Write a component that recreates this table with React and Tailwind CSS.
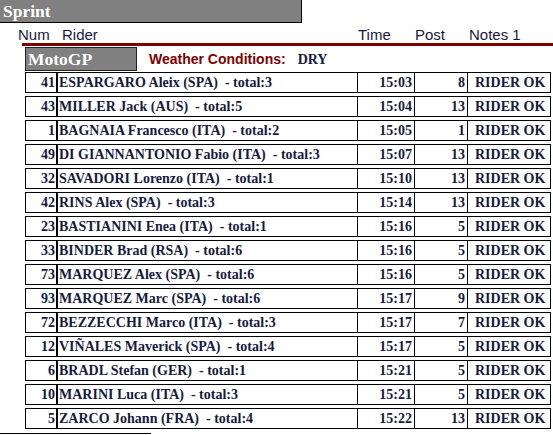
import React from "react";

const rows = [
  ["41", "ESPARGARO Aleix (SPA)  - total:3", "15:03", "8"],
  ["43", "MILLER Jack (AUS)  - total:5", "15:04", "13"],
  ["1", "BAGNAIA Francesco (ITA)  - total:2", "15:05", "1"],
  ["49", "DI GIANNANTONIO Fabio (ITA)  - total:3", "15:07", "13"],
  ["32", "SAVADORI Lorenzo (ITA)  - total:1", "15:10", "13"],
  ["42", "RINS Alex (SPA)  - total:3", "15:14", "13"],
  ["23", "BASTIANINI Enea (ITA)  - total:1", "15:16", "5"],
  ["33", "BINDER Brad (RSA)  - total:6", "15:16", "5"],
  ["73", "MARQUEZ Alex (SPA)  - total:6", "15:16", "5"],
  ["93", "MARQUEZ Marc (SPA)  - total:6", "15:17", "9"],
  ["72", "BEZZECCHI Marco (ITA)  - total:3", "15:17", "7"],
  ["12", "VIÑALES Maverick (SPA)  - total:4", "15:17", "5"],
  ["6", "BRADL Stefan (GER)  - total:1", "15:21", "5"],
  ["10", "MARINI Luca (ITA)  - total:3", "15:21", "5"],
  ["5", "ZARCO Johann (FRA)  - total:4", "15:22", "13"],
];

const serif = "font-['Liberation_Serif',serif]";
const sans = "font-['Liberation_Sans',Arial,sans-serif]";

export default function App() {
  return (
    <div className="w-[553px] h-[435px] bg-white overflow-hidden text-[#161a3e]">
      <div className={`w-[302px] h-[23px] bg-[#808080] border-r border-b border-black text-white font-bold text-[17.5px] leading-[22px] pl-[3px] ${serif}`}>
        Sprint
      </div>
      <div className={`flex h-[20px] items-end text-[15px] leading-[17px] ${sans}`}>
        <span className="ml-[18px] w-[44px]">Num</span>
        <span className="w-[296px]">Rider</span>
        <span className="w-[57px]">Time</span>
        <span className="w-[54px]">Post</span>
        <span>Notes 1</span>
      </div>
      <div className="ml-[22px] h-[3px] bg-[#800000]" />
      <div className="flex items-center h-[24px] mt-[1px] ml-[25px]">
        <div className={`w-[112px] h-[24px] bg-[#808080] border border-[#222] text-white font-bold text-[17.5px] leading-[22px] pl-[2px] ${serif}`}>
          MotoGP
        </div>
        <span className={`ml-[12px] text-[#800000] font-bold text-[14px] ${sans}`}>Weather Conditions:</span>
        <span className={`ml-[12px] text-[#161a3e] font-bold text-[14px] ${serif}`}>DRY</span>
      </div>
      <div className={`ml-[25px] w-[526px] flex flex-col gap-[3px] mt-[1px] font-bold text-[14px] ${serif}`}>
        {rows.map((r, i) => (
          <div key={i} className="flex h-[21px] border border-black leading-[19px]">
            <div className="w-[32px] text-right pr-[1px] border-r-2 border-black">{r[0]}</div>
            <div className="w-[300px] pl-[1px] border-r border-black whitespace-pre">{r[1]}</div>
            <div className="w-[57px] text-right pr-[2px] border-r border-black">{r[2]}</div>
            <div className="w-[53px] text-right pr-[2px] border-r border-black">{r[3]}</div>
            <div className="flex-1 pl-[7px]">RIDER OK</div>
          </div>
        ))}
      </div>
      <div className="mt-[4px] w-[151px] h-[4px] border-t border-black" />
    </div>
  );
}
